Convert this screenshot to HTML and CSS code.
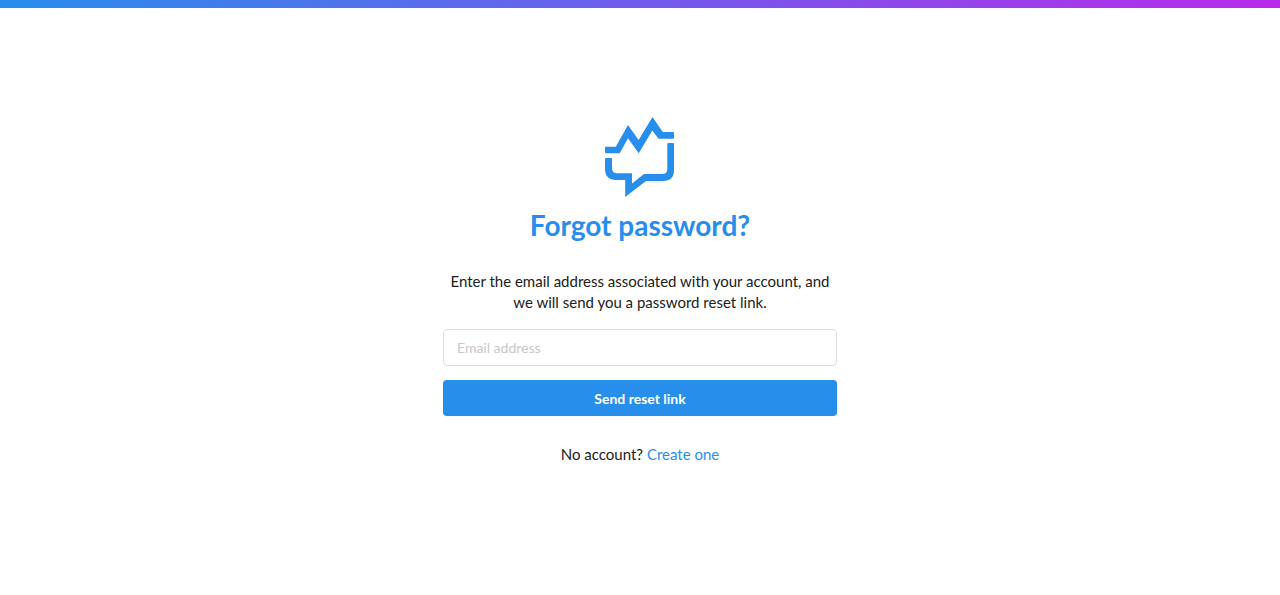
FILE: index.html
```html
<!DOCTYPE html>
<html lang="en">
<head>
<meta charset="utf-8">
<title>Forgot password?</title>
<link rel="stylesheet" href="styles.css">
</head>
<body>
<div class="topbar"></div>
<main class="page">
  <div class="panel">
    <svg class="logo" viewBox="0 0 70 80" aria-hidden="true">
      <path class="logo-shape" d="M1 29.800H10.800L23 8L33.600 23L47.500 0L57.800 15H68Q69 15 69 16V20.700Q69 21.700 68 21.700H53.500L47.300 13.600L33.700 36.300L23 21.300L14.700 36.200H1Q0 36.200 0 35.200V30.800Q0 29.800 1 29.800Z"/>
      <path class="logo-shape" d="M1 41H6Q7 41 7 42V51Q7 56.300 12 56.300H27V66.500L39 57H57.500Q62.300 57 62.300 52V27Q62.300 26 63.300 26H68Q69 26 69 27V53Q69 64 58 64H41L20.200 80V63H11Q0 62.500 0 52V42Q0 41 1 41Z"/>
    </svg>
    <h1 class="title">Forgot password?</h1>
    <p class="intro">Enter the email address associated with your account, and we will send you a password reset link.</p>
    <form class="form">
      <input class="field" type="email" placeholder="Email address" aria-label="Email address">
      <button class="submit" type="submit">Send reset link</button>
    </form>
    <p class="signup">No account? <a href="#">Create one</a></p>
  </div>
</main>
</body>
</html>
```
FILE: styles.css
```css
* { box-sizing: border-box; }
body {
  margin: 0;
  min-height: 100vh;
  display: flex;
  flex-direction: column;
  background: #fff;
  color: #212121;
  font: 15px/21px Lato, sans-serif;
}
.topbar { height: 8px; background: linear-gradient(90deg, #288eec, #b92aeb); }
.page { flex: 1; display: flex; justify-content: center; padding: 109px 16px 32px; }
.panel { width: 100%; max-width: 394px; text-align: center; }
.logo { display: block; width: 70px; height: 80px; margin: 0 auto; }
.logo-shape { fill: #288eec; }
.title { margin: 10px 0 28px; color: #288eec; font-size: 28px; line-height: 36px; font-weight: 700; }
.intro { margin: 0 0 16px; }
.form { display: flex; flex-direction: column; gap: 14px; }
.field { height: 37px; padding: 0 13px; border: 1px solid #dededf; border-radius: 4px; font: 14px Lato, sans-serif; color: #212121; background: #fff; }
.field::placeholder { color: #c7c7c7; }
.submit { height: 36px; padding: 0; border: 0; border-radius: 4px; background: #288eec; color: #fff; font: 700 14px Lato, sans-serif; cursor: pointer; }
.signup { margin: 28px 0 0; }
.signup a { color: #288eec; text-decoration: none; }
```
